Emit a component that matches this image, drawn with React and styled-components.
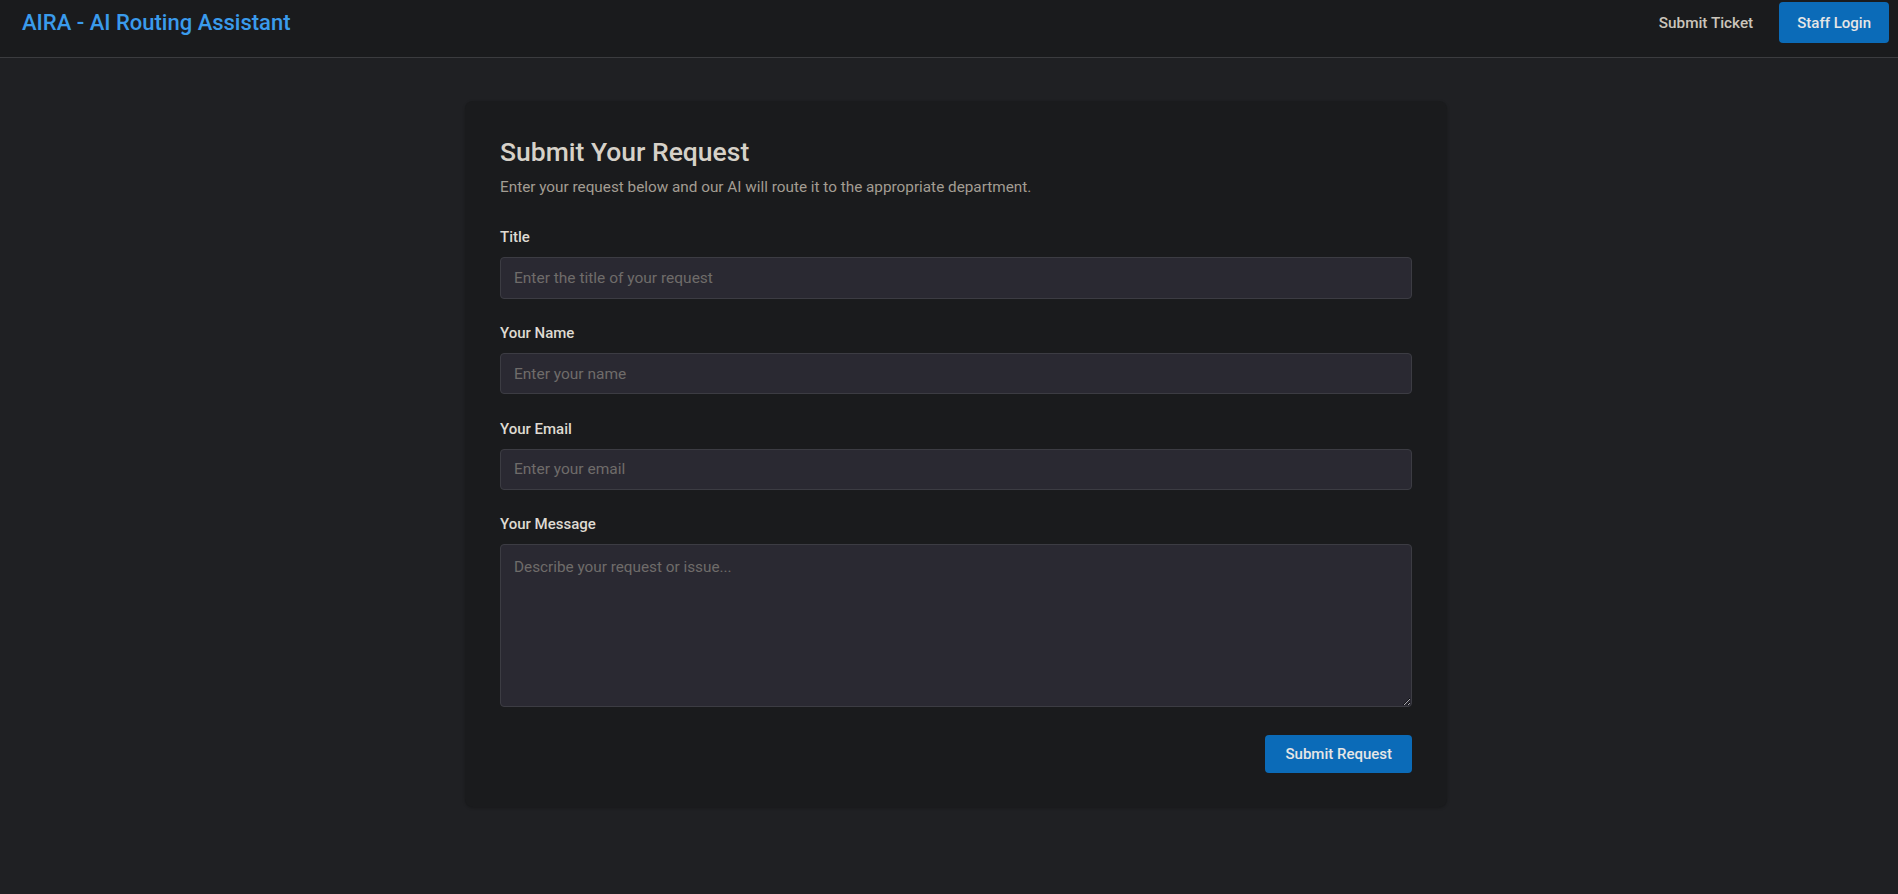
import React from "react";
import styled, { createGlobalStyle } from "styled-components";

const GlobalStyle = createGlobalStyle`
  * { box-sizing: border-box; }
  html, body { margin: 0; padding: 0; }
  body {
    background: #1f2023;
    font-family: Roboto, "Noto Sans", "Liberation Sans", sans-serif;
    color: #d6d1c8;
    min-height: 100vh;
  }
`;

const Page = styled.div`
  min-height: 100vh;
  background: #1f2023;
`;

const Header = styled.header`
  display: flex;
  align-items: center;
  justify-content: space-between;
  height: 58px;
  padding: 2px 9px 14px 22px;
  background: #1a1b1d;
  border-bottom: 1px solid #3b3c3f;
`;

const Logo = styled.a`
  font-size: 22px;
  font-weight: 500;
  color: #3a9bec;
  text-decoration: none;
`;

const Nav = styled.nav`
  display: flex;
  align-items: center;
  gap: 26px;
`;

const NavLink = styled.a`
  font-size: 15.3px;
  font-weight: 500;
  color: #cbc5bb;
  text-decoration: none;
`;

const PrimaryButton = styled.button`
  display: inline-flex;
  align-items: center;
  justify-content: center;
  height: ${(p) => p.$height}px;
  padding: 0 ${(p) => p.$padX}px;
  border: none;
  border-radius: 4px;
  background: #0b6bb8;
  color: #e6e6e6;
  font-family: inherit;
  font-size: 15px;
  font-weight: 500;
  cursor: pointer;
`;

const Main = styled.main`
  padding: 43px 0 40px 14px;
  display: flex;
  justify-content: center;
`;

const Card = styled.section`
  width: 982px;
  background: #1a1b1d;
  border-radius: 8px;
  padding: 35px 35px 34px;
  box-shadow: 0 1px 3px rgba(0, 0, 0, 0.25);
`;

const Title = styled.h1`
  margin: 0 0 8px;
  font-size: 26.5px;
  line-height: 1.2;
  font-weight: 500;
  color: #d6d1c8;
`;

const Subtitle = styled.p`
  margin: 0 0 27.5px;
  font-size: 15.3px;
  line-height: 1.5;
  color: #a39d93;
`;

const Form = styled.form`
  display: flex;
  flex-direction: column;
  gap: 23.2px;
`;

const Field = styled.div`
  display: flex;
  flex-direction: column;
`;

const Label = styled.label`
  font-size: 15px;
  line-height: 1.5;
  font-weight: 500;
  color: #dedad2;
  margin-bottom: 8.5px;
`;

const Input = styled.input`
  height: 41.5px;
  width: 100%;
  padding: 0 13px;
  background: #2a2932;
  border: 1px solid #3c3c43;
  border-radius: 4px;
  color: #d6d1c8;
  font-family: inherit;
  font-size: 15.5px;
  outline: none;
  &::placeholder { color: #6f6c6a; }
`;

const TextArea = styled.textarea`
  height: 163px;
  width: 100%;
  padding: 11px 13px;
  background: #2a2932;
  border: 1px solid #3c3c43;
  border-radius: 4px;
  color: #d6d1c8;
  font-family: inherit;
  font-size: 15.3px;
  line-height: 1.5;
  outline: none;
  resize: vertical;
  &::placeholder { color: #6f6c6a; }
`;

const Actions = styled.div`
  display: flex;
  justify-content: flex-end;
  margin-top: 5px;
`;

const fields = [
  { id: "title", label: "Title", placeholder: "Enter the title of your request" },
  { id: "name", label: "Your Name", placeholder: "Enter your name" },
  { id: "email", label: "Your Email", placeholder: "Enter your email" },
];

export default function App() {
  return (
    <Page>
      <GlobalStyle />
      <Header>
        <Logo href="#">AIRA - AI Routing Assistant</Logo>
        <Nav>
          <NavLink href="#">Submit Ticket</NavLink>
          <PrimaryButton $height={41} $padX={18}>Staff Login</PrimaryButton>
        </Nav>
      </Header>
      <Main>
        <Card>
          <Title>Submit Your Request</Title>
          <Subtitle>
            Enter your request below and our AI will route it to the appropriate department.
          </Subtitle>
          <Form onSubmit={(e) => e.preventDefault()}>
            {fields.map((f) => (
              <Field key={f.id}>
                <Label htmlFor={f.id}>{f.label}</Label>
                <Input id={f.id} placeholder={f.placeholder} />
              </Field>
            ))}
            <Field>
              <Label htmlFor="message">Your Message</Label>
              <TextArea id="message" placeholder="Describe your request or issue..." />
            </Field>
            <Actions>
              <PrimaryButton type="submit" $height={38} $padX={20}>
                Submit Request
              </PrimaryButton>
            </Actions>
          </Form>
        </Card>
      </Main>
    </Page>
  );
}
